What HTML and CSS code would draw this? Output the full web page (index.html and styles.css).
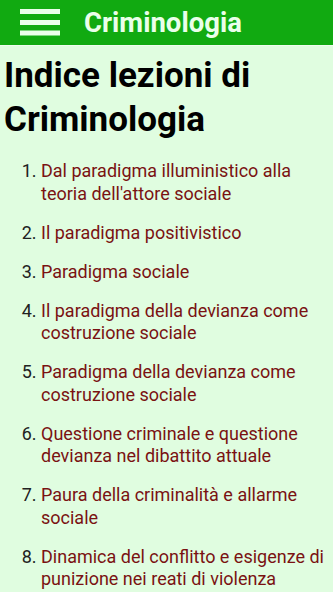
FILE: index.html
```html
<!DOCTYPE html>
<html lang="it">
<head>
<meta charset="utf-8">
<title>Criminologia</title>
<link rel="stylesheet" href="styles.css">
</head>
<body>
<header class="appbar">
  <svg class="menu" width="40" height="28" viewBox="0 0 40 28" aria-hidden="true">
    <rect x="0" y="0" width="40" height="5" fill="#eaffea"/>
    <rect x="0" y="11" width="40" height="5" fill="#eaffea"/>
    <rect x="0" y="21.5" width="40" height="5" fill="#eaffea"/>
  </svg>
  <span class="apptitle">Criminologia</span>
</header>
<main class="content">
  <h1 class="heading">Indice lezioni di Criminologia</h1>
  <ol class="lessons">
    <li><a>Dal paradigma illuministico alla teoria dell'attore sociale</a></li>
    <li><a>Il paradigma positivistico</a></li>
    <li><a>Paradigma sociale</a></li>
    <li><a>Il paradigma della devianza come costruzione sociale</a></li>
    <li><a>Paradigma della devianza come costruzione sociale</a></li>
    <li><a>Questione criminale e questione devianza nel dibattito attuale</a></li>
    <li><a>Paura della criminalità e allarme sociale</a></li>
    <li><a>Dinamica del conflitto e esigenze di punizione nei reati di violenza sessuale</a></li>
  </ol>
</main>
</body>
</html>
```
FILE: styles.css
```css
html, body {
  margin: 0;
  padding: 0;
}
body {
  background: #e0fde0;
  font-family: Roboto, "Noto Sans", sans-serif;
  overflow: hidden;
  height: 592px;
}
.appbar {
  height: 46px;
  background: #11aa11;
  display: flex;
  align-items: center;
  padding-left: 20px;
  box-sizing: border-box;
  border-bottom: 1px solid #eefeee;
}
.menu {
  display: block;
  margin-top: 1px;
}
.apptitle {
  margin-left: 24px;
  color: #eaffea;
  font-weight: bold;
  font-size: 27.5px;
}
.content {
  padding: 0 4px;
}
.heading {
  margin: 8px 0 0;
  font-size: 35px;
  line-height: 44px;
  font-weight: bold;
  color: #000;
}
.lessons {
  margin: 18px 0 0;
  padding-left: 37px;
  font-size: 18px;
  line-height: 22.5px;
  color: #222;
}
.lessons li {
  margin-bottom: 16.5px;
}
.lessons a {
  color: #7a1212;
}
```
